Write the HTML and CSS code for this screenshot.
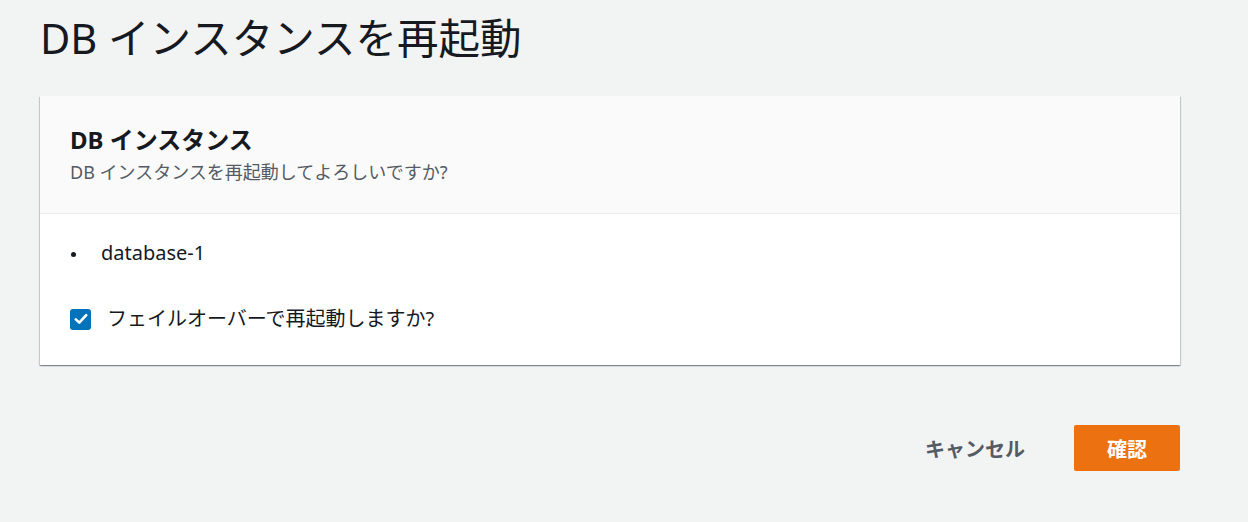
FILE: index.html
```html
<!DOCTYPE html>
<html lang="ja">
<head>
    <meta charset="UTF-8">
    <title>DB インスタンスを再起動</title>
    <link rel="stylesheet" href="styles.css">
</head>
<body>

    <div class="page">
        <h1 class="page-title">DB インスタンスを再起動</h1>

        <div class="card">
            <div class="card-head">
                <h2 class="card-title">DB インスタンス</h2>
                <p class="card-desc">DB インスタンスを再起動してよろしいですか?</p>
            </div>
            <div class="card-body">
                <ul class="db-list">
                    <li><span class="dot"></span>database-1</li>
                </ul>
                <label class="check-row">
                    <span class="check">
                        <svg width="14" height="12" viewBox="0 0 14 12">
                            <path d="M1.8 6.4 L5.3 9.6 L12.2 2.2" fill="none" stroke="#fff" stroke-width="2.6" stroke-linecap="round" stroke-linejoin="round"/>
                        </svg>
                    </span>
                    フェイルオーバーで再起動しますか?
                </label>
            </div>
        </div>

        <div class="actions">
            <span class="btn-link">キャンセル</span>
            <span class="btn-primary">確認</span>
        </div>
    </div>

</body>
</html>
```

FILE: styles.css
```css
html,body,h1,h2,p,ul,li{margin: 0; padding: 0;}
body{background: #f2f3f3; color: #16191f; font-family: "Noto Sans", "Noto Sans CJK JP", sans-serif;}

.page {
    width: 1140px;
    padding: 13px 0 0 40px;
}

.page-title {
    font-size: 41.5px;
    line-height: 50px;
    font-weight: 400;
}

.card {
    margin-top: 33px;
    background: #fff;
    box-shadow: 0 1px 1px 0 rgba(0,28,36,.3), 1px 1px 1px 0 rgba(0,28,36,.15), -1px 1px 1px 0 rgba(0,28,36,.15);
}
.card-head {
    background: #fafafa;
    border-bottom: 1px solid #eaeded;
    padding: 29px 30px 29px;
}
.card-title {
    font-size: 24px;
    line-height: 30px;
    font-weight: 700;
}
.card-desc {
    margin-top: 5px;
    font-size: 18px;
    line-height: 24px;
    color: #545b64;
}

.card-body {
    padding: 25px 30px 32px;
    font-size: 20px;
    line-height: 28px;
}
.db-list {list-style: none;}
.db-list li {display: flex; align-items: center;}
.dot {
    width: 5px;
    height: 5px;
    border-radius: 50%;
    background: #16191f;
    margin: 2px 25px 0 1px;
}

.check-row {
    display: flex;
    align-items: center;
    margin-top: 38px;
}
.check {
    width: 21px;
    height: 21px;
    border-radius: 3px;
    background: #0073bb;
    display: flex;
    align-items: center;
    justify-content: center;
    margin-right: 16px;
}

.actions {
    display: flex;
    justify-content: flex-end;
    align-items: center;
    gap: 49px;
    margin-top: 60px;
}
.btn-link {
    font-size: 20px;
    font-weight: 700;
    color: #545b64;
}
.btn-primary {
    width: 106px;
    height: 46px;
    border-radius: 2px;
    background: #ec7211;
    color: #fff;
    font-size: 20px;
    font-weight: 700;
    display: flex;
    align-items: center;
    justify-content: center;
}
```
